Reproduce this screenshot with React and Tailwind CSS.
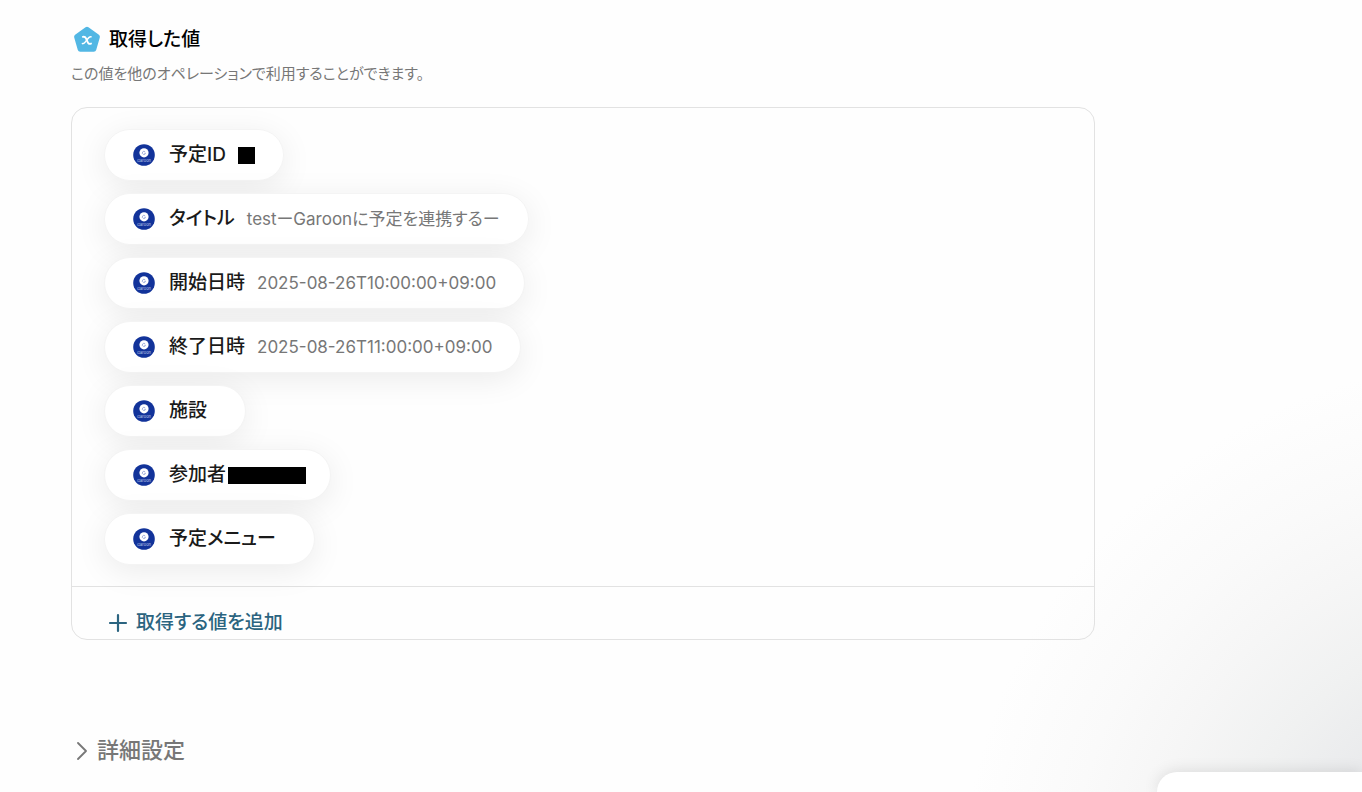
const values = [
  { label: '予定ID', mask: 'w-[17px]' },
  { label: 'タイトル', value: 'testーGaroonに予定を連携するー' },
  { label: '開始日時', value: '2025-08-26T10:00:00+09:00' },
  { label: '終了日時', value: '2025-08-26T11:00:00+09:00' },
  { label: '施設' },
  { label: '参加者', mask: '-ml-2.5 -mr-1 w-[78px]' },
  { label: '予定メニュー' },
]

function PentagonIcon() {
  return (
    <svg viewBox="0 0 28 28" className="size-7 shrink-0" aria-hidden="true">
      <path
        d="M14 3.2 L24.4 10.8 L20.8 23.2 H7.2 L3.6 10.8 Z"
        fill="#52b7e4"
        stroke="#52b7e4"
        strokeWidth="5"
        strokeLinejoin="round"
      />
      <path
        d="M9.8 10.8 C11.4 10.4 12.4 11 13 12.4 L14.8 16.4 C15.4 17.8 16.6 18.2 18 17.6"
        fill="none"
        stroke="#fff"
        strokeWidth="1.9"
        strokeLinecap="round"
      />
      <path
        d="M18 10.8 C16.8 10.6 15.8 11.4 14.8 12.7 L12.6 15.6 C11.6 17 10.6 17.8 9.4 17.6"
        fill="none"
        stroke="#fff"
        strokeWidth="1.5"
        strokeLinecap="round"
      />
    </svg>
  )
}

function GaroonIcon() {
  return (
    <svg viewBox="0 0 22 22" className="size-[22px] shrink-0" aria-hidden="true">
      <circle cx="11" cy="11" r="10.8" fill="#12339a" />
      <circle cx="11" cy="8.8" r="4.6" fill="#fff" />
      <path
        d="M12.2 7.9 A1.6 1.6 0 1 0 12.5 9.3 H11.2"
        fill="none"
        stroke="#8fa0d4"
        strokeWidth="0.8"
      />
      <text
        x="11"
        y="18"
        fill="#c3cdea"
        fontSize="4"
        textAnchor="middle"
        fontFamily="Inter, sans-serif"
      >
        Garoon
      </text>
    </svg>
  )
}

function ValuePill({ label, value, mask }) {
  return (
    <li className="flex h-[52px] items-center rounded-full border border-[#f4f4f4] bg-white px-7 shadow-[0_6px_32px_rgba(0,0,0,0.08)]">
      <GaroonIcon />
      <span className="ml-3.5 text-[19px] leading-7 font-medium text-[#1a1a1a]">
        {label}
      </span>
      {value && <span className="ml-3 text-[17px] leading-6 text-[#777]">{value}</span>}
      {!value && <span className={mask ? `ml-3` : 'ml-2.5'} />}
      {mask && <span className={`h-[17px] bg-black ${mask}`} />}
    </li>
  )
}

export default function App() {
  return (
    <main className="relative min-h-screen overflow-hidden bg-[#fefefe] bg-[radial-gradient(circle_540px_at_calc(100%+138px)_900px,#e2e3e6_0%,#e9eaec_34%,#f0f1f1_50%,#f6f6f6_66%,#fafafa_80%,#fefefe_100%)] px-[71px] pt-6 font-['Inter','Noto_Sans_CJK_JP',sans-serif] [font-feature-settings:'palt']">
      <section className="max-w-5xl">
        <h2 className="ml-0.5 flex items-center gap-2 text-[19px] leading-8 font-medium text-black">
          <PentagonIcon />
          取得した値
        </h2>
        <p className="mt-1.5 text-[15px] leading-6 text-[#777]">
          この値を他のオペレーションで利用することができます。
        </p>

        <div className="mt-[21px] overflow-hidden rounded-2xl border border-[#e2e2e2]">
          <ul className="flex flex-col items-start gap-3 px-8 py-[21px]">
            {values.map((item) => (
              <ValuePill key={item.label} {...item} />
            ))}
          </ul>
          <div className="border-t border-[#e2e2e2] px-9 pt-5">
            <button
              type="button"
              className="flex items-center gap-2 text-[19px] leading-8 font-medium text-[#2b6480]"
            >
              <svg viewBox="0 0 20 20" className="size-5" aria-hidden="true">
                <path
                  d="M10 2 V18 M2 10 H18"
                  stroke="currentColor"
                  strokeWidth="2.2"
                  strokeLinecap="round"
                />
              </svg>
              取得する値を追加
            </button>
          </div>
        </div>
      </section>

      <button
        type="button"
        className="mt-[94px] flex items-center gap-1.5 text-[22px] leading-8 font-medium text-[#777]"
      >
        <svg viewBox="0 0 20 20" className="size-5" fill="none" aria-hidden="true">
          <path
            d="M7 3 L15 11 L7 19"
            stroke="currentColor"
            strokeWidth="1.8"
            strokeLinecap="round"
            strokeLinejoin="round"
          />
        </svg>
        詳細設定
      </button>

      <div className="absolute right-0 bottom-0 h-5 w-[205px] rounded-tl-3xl bg-white shadow-[0_0_16px_rgba(0,0,0,0.12)]" />
    </main>
  )
}
